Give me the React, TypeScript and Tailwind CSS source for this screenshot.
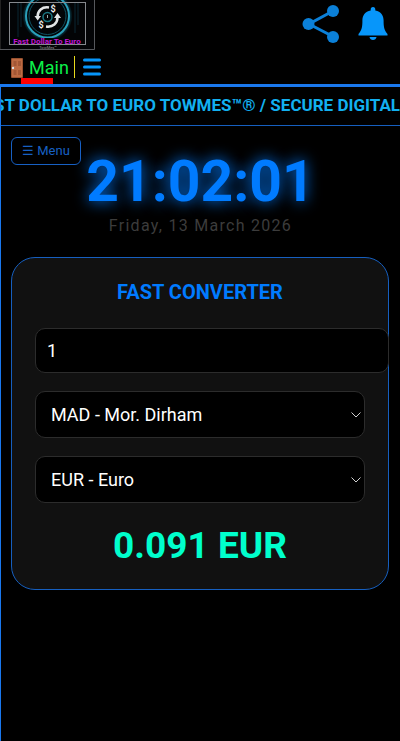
import { useState } from 'react';

const CURRENCIES = [
  { code: 'MAD', name: 'Mor. Dirham', perEuro: 10.989 },
  { code: 'EUR', name: 'Euro',        perEuro: 1 },
  { code: 'USD', name: 'US Dollar',   perEuro: 1.145 },
];

function convert(amount: number, from: string, to: string): string {
  const a = CURRENCIES.find(c => c.code === from)!;
  const b = CURRENCIES.find(c => c.code === to)!;
  return ((amount / a.perEuro) * b.perEuro).toFixed(3);
}

function Logo() {
  return (
    <svg width="95" height="50" viewBox="0 0 95 50" role="img" aria-label="Fast Dollar To Euro">
      <defs>
        <radialGradient id="halo">
          <stop offset="0.5" stopColor="#020608" />
          <stop offset="0.85" stopColor="#0b4a5c" />
          <stop offset="1" stopColor="#020608" />
        </radialGradient>
      </defs>
      <rect width="95" height="50" fill="#030406" />
      <path d="M0 49.5H94.5V0" fill="none" stroke="#56585c" />
      <path d="M0.5 0V49" stroke="#222" />
      <path d="M18 3v34M21 3v24M75 3v30M78 3v22" stroke="#0b2733" />
      <circle cx="47.500" cy="16" r="25" fill="url(#halo)" />
      <circle cx="47.500" cy="16" r="21.500" fill="#020507" stroke="#2a9fb9" strokeWidth="2" />
      <circle cx="47.500" cy="16" r="18.500" fill="none" stroke="#0d5263" />
      <rect x="9.500" y="2.500" width="76" height="42" fill="none" stroke="#85888d" />
      <rect x="11" y="38" width="73" height="6" fill="#030406" />
      <circle cx="47.500" cy="17" r="4.500" fill="none" stroke="#1b7783" strokeWidth="1.500" />
      <path d="M47.500 15v3" stroke="#9aa" />
      <path d="M49 7.500C42 6.500 37.500 10.500 37.500 17M46 26.500C53 27.500 57.500 23.500 57.500 17" fill="none" stroke="#e2e5e6" strokeWidth="2.500" />
      <path d="M34.500 16h6.500l-3.300 4.500zM54 18h7l-3.500-5z" fill="#e2e5e6" />
      <text x="50.500" y="12" fill="#eee" fontSize="9" fontWeight="700" fontFamily="Roboto, sans-serif">$</text>
      <text x="38.500" y="28" fill="#eee" fontSize="9" fontWeight="700" fontFamily="Roboto, sans-serif">$</text>
      <text x="47" y="43.500" textAnchor="middle" fill="#c416d4" fontSize="8" fontWeight="700" fontFamily="Roboto, sans-serif">Fast Dollar To Euro</text>
      <text x="48" y="48.500" textAnchor="middle" fill="#999" fontSize="4" fontFamily="Roboto, sans-serif">TowMes™</text>
    </svg>
  );
}

function ShareIcon() {
  return (
    <svg width="38" height="40" viewBox="0 0 38 40" aria-hidden="true">
      <path d="M31 6L7 19L31 31.500" fill="none" stroke="#0b80d8" strokeWidth="3" />
      <g fill="#0b80d8">
        <circle cx="31" cy="6" r="6" />
        <circle cx="6.500" cy="19" r="6" />
        <circle cx="31" cy="32" r="6" />
      </g>
    </svg>
  );
}

function BellIcon() {
  return (
    <svg width="30" height="36" viewBox="0 0 30 36" aria-hidden="true" fill="#0796fa">
      <path d="M15 2c1.600 0 2.300 1 2.300 2.600v.9C23 6.500 25.600 10.500 25.600 15.500c0 6 .4 9.500 3.900 13.500v1.500H.500V29c3.500-4 3.900-7.500 3.900-13.500C4.400 10.500 7 6.500 12.700 5.500v-.9C12.700 3 13.400 2 15 2z" />
      <path d="M11.500 32h7c-.3 1.800-1.700 3-3.500 3s-3.200-1.200-3.500-3z" />
    </svg>
  );
}

function DoorIcon() {
  return (
    <svg width="12" height="20" viewBox="0 0 12 20" aria-hidden="true">
      <rect width="12" height="20" rx="1" fill="#99512f" />
      <rect x="1" y="1" width="10" height="18" fill="#bd6b43" />
      <path d="M2.500 3h3v5h-3zM7 3h3v5H7zM2.500 12h3v5h-3zM7 12h3v5H7z" fill="#a35735" />
      <circle cx="2" cy="10" r="1.200" fill="#dbe3e8" />
    </svg>
  );
}

function BarsIcon() {
  return (
    <svg width="18" height="18" viewBox="0 0 18 18" aria-hidden="true">
      <path d="M1.500 2h15M1.500 9h15M1.500 16h15" stroke="#0796fa" strokeWidth="3" strokeLinecap="round" />
    </svg>
  );
}

function CurrencySelect({ label, value, onChange }: { label: string; value: string; onChange: (v: string) => void }) {
  return (
    <div className="grid items-center">
      <select aria-label={label} value={value} onChange={e => onChange(e.target.value)}
        className="col-start-1 row-start-1 appearance-none w-full h-[47px] px-[15px] rounded-[10px] border border-[#2c2c2c] bg-black text-white text-[18px]">
        {CURRENCIES.map(c => (
          <option key={c.code} value={c.code}>{c.code} - {c.name}</option>
        ))}
      </select>
      <svg width="10" height="6" viewBox="0 0 10 6" aria-hidden="true"
        className="col-start-1 row-start-1 justify-self-end mr-1 pointer-events-none">
        <path d="M0.500 0.500L5 5L9.500 0.500" fill="none" stroke="#d0d0d0" />
      </svg>
    </div>
  );
}

export default function App() {
  const [amount, setAmount] = useState('1');
  const [from, setFrom]     = useState('MAD');
  const [to, setTo]         = useState('EUR');

  return (
    <div className="flex flex-col min-h-screen bg-black overflow-hidden font-[Roboto,sans-serif]">
      <header>
        <div className="flex justify-between items-start">
          <a href="#home"><Logo /></a>
          <div className="flex items-start gap-[18px] pt-[5px] pr-3">
            <button aria-label="Share"><ShareIcon /></button>
            <button aria-label="Notifications"><BellIcon /></button>
          </div>
        </div>
        <nav className="flex items-center h-7 pt-[6px] pl-[11px]">
          <a href="#main" className="flex items-center gap-[6px] pt-[2px] text-[18px] leading-6 text-[#0cf04a]">
            <DoorIcon />
            Main
          </a>
          <span className="w-px h-[22px] ml-[5px] mr-2 bg-[#e8d91c]" />
          <button aria-label="Open menu"><BarsIcon /></button>
        </nav>
        <div className="w-8 h-[6px] ml-[21px] bg-[#ff0000]" />
      </header>

      <main className="flex-1 border-t-3 border-l border-[#1a78ee]">
        <div className="flex items-center justify-end h-[39px] overflow-hidden border-b border-[#165fbf]">
          <p className="whitespace-nowrap text-[17px] font-bold text-[#12b0f0]">
            FAST DOLLAR TO EURO TOWMES™® / SECURE DIGITAL
          </p>
        </div>

        <section className="relative pt-[26px] text-center">
          <button className="absolute left-[10px] top-[11px] h-[28px] px-[10px] rounded-md border border-[#1760c4] bg-black text-[13px] text-[#1760c4]">
            ☰ Menu
          </button>
          <time className="block text-[57px] leading-15 font-bold text-[#007bff] [text-shadow:0_0_15px_#007bff]">21:02:01</time>
          <p className="pt-[2px] text-base leading-6 tracking-[0.08em] text-[#3c3c3c]">Friday, 13 March 2026</p>
        </section>

        <form className="mt-[19px] ml-[10px] mr-[11px] px-[23px] pt-5 pb-5 rounded-3xl border border-[#165fbf] bg-[#111111]">
          <h1 className="text-xl leading-7 font-bold text-center text-[#007bff]">FAST CONVERTER</h1>
          <input aria-label="Amount" value={amount} onChange={e => setAmount(e.target.value)}
            className="block box-content w-full h-[19px] mt-[22px] mb-[18px] px-[11px] py-3 rounded-[10px] border border-[#2c2c2c] bg-black text-white text-[18px]" />
          <div className="flex flex-col gap-[18px]">
            <CurrencySelect label="From currency" value={from} onChange={setFrom} />
            <CurrencySelect label="To currency" value={to} onChange={setTo} />
          </div>
          <output className="block mt-5 text-[37px] leading-[46px] font-bold text-center text-[#00ffcc]">
            {convert(Number(amount) || 0, from, to)} {to}
          </output>
        </form>
      </main>
    </div>
  );
}
